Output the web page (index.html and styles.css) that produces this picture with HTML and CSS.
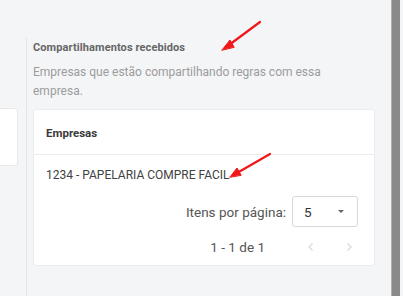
FILE: index.html
```html
<!DOCTYPE html>
<html>
<head>
<meta charset="utf-8">
<link rel="stylesheet" href="styles.css">
</head>
<body>
<div class="app">
  <div class="left">
    <div class="left-card"></div>
  </div>
  <div class="main">
    <h2 class="title">Compartilhamentos recebidos</h2>
    <p class="desc">Empresas que estão compartilhando regras com essa empresa.</p>
    <div class="card">
      <div class="card-head">Empresas</div>
      <div class="row">1234 - PAPELARIA COMPRE FACIL</div>
      <div class="pager">
        <div class="per-page">
          <span class="label">Itens por página:</span>
          <div class="select"><span>5</span><span class="caret"></span></div>
        </div>
        <div class="range">
          <span class="count">1 - 1 de 1</span>
          <span class="nav">
            <svg width="8" height="10" viewBox="0 0 8 10"><path d="M5.5 1.5 L2 5 L5.5 8.5" fill="none" stroke="#d9d9d9" stroke-width="1.2"/></svg>
          </span>
          <span class="nav">
            <svg width="8" height="10" viewBox="0 0 8 10"><path d="M2.5 1.5 L6 5 L2.5 8.5" fill="none" stroke="#d9d9d9" stroke-width="1.2"/></svg>
          </span>
        </div>
      </div>
    </div>
  </div>
  <div class="scroll"></div>
</div>
<svg class="arrows" width="403" height="296" viewBox="0 0 403 296">
  <g stroke="#f01818" stroke-width="2.2" stroke-linecap="round" fill="#f01818">
    <line x1="260" y1="22" x2="229" y2="45"/>
    <polygon points="222,50 230,40 234,47" stroke-width="1"/>
    <line x1="270" y1="154" x2="237" y2="173"/>
    <polygon points="230,177 237,168 241,175" stroke-width="1"/>
  </g>
</svg>
</body>
</html>
```
FILE: styles.css
```css
html, body {
  margin: 0;
  padding: 0;
}
body {
  width: 403px;
  height: 296px;
  overflow: hidden;
  background: #f4f5f6;
  font-family: Roboto, "Liberation Sans", sans-serif;
  position: relative;
}
.app {
  display: flex;
  height: 296px;
}
.left {
  width: 26px;
  padding-top: 108px;
  flex: none;
}
.left-card {
  width: 17px;
  height: 56px;
  background: #fff;
  border: 1px solid #e8e8e8;
  border-left: none;
  border-radius: 0 3px 3px 0;
}
.main {
  flex: none;
  width: 342px;
  margin-top: 38px;
  border-left: 1px solid #e4e4e4;
  padding: 0 16px 0 6px;
}
.title {
  margin: 3px 0 0;
  font-size: 11px;
  line-height: 14px;
  font-weight: 700;
  color: #666;
  letter-spacing: 0.1px;
}
.desc {
  margin: 8px 0 0;
  font-size: 12px;
  line-height: 19px;
  color: #9c9c9c;
  width: 300px;
}
.card {
  margin-top: 8px;
  background: #fff;
  border: 1px solid #ececec;
  border-radius: 3px;
  height: 155px;
}
.card-head {
  height: 45px;
  box-sizing: border-box;
  padding: 16px 0 0 12px;
  font-size: 11.5px;
  line-height: 14px;
  font-weight: 700;
  color: #3a3a3a;
  border-bottom: 1px solid #ececec;
}
.row {
  padding: 13px 0 0 12px;
  font-size: 12px;
  line-height: 14px;
  color: #424242;
}
.pager {
  display: flex;
  flex-direction: column;
  align-items: flex-end;
  padding-right: 16px;
  margin-top: 14px;
}
.per-page {
  display: flex;
  align-items: center;
  gap: 6px;
}
.label {
  font-size: 13.5px;
  color: #555;
}
.select {
  width: 66px;
  height: 31px;
  box-sizing: border-box;
  border: 1px solid #d8d8d8;
  border-radius: 3px;
  display: flex;
  align-items: center;
  justify-content: space-between;
  padding: 0 13px 0 11px;
  font-size: 13.5px;
  color: #333;
}
.caret {
  width: 0;
  height: 0;
  border-left: 3px solid transparent;
  border-right: 3px solid transparent;
  border-top: 3px solid #666;
}
.range {
  display: flex;
  align-items: center;
  margin-top: 12px;
  margin-right: 5px;
  height: 16px;
}
.count {
  font-size: 13.5px;
  color: #555;
  margin-right: 42px;
}
.nav {
  display: flex;
  width: 38px;
  justify-content: flex-start;
}
.nav:last-child {
  width: 8px;
}
.scroll {
  flex: none;
  width: 8px;
  background: #8a8a8a;
  border-left: 1px solid #b0b0b0;
}
.arrows {
  position: absolute;
  left: 0;
  top: 0;
  pointer-events: none;
}
```
